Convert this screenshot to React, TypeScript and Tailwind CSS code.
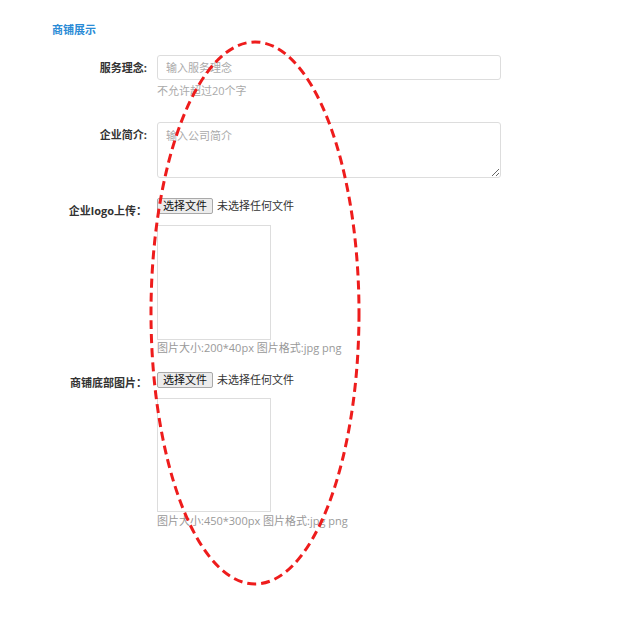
const FONT = "font-['Open_Sans','Noto_Sans_CJK_SC',sans-serif]";

function FileRow({ label, labelPad }: { label: string; labelPad: string }) {
  return (
    <div className="flex h-[16px] items-start">
      <div className={`h-[16px] w-[147px] whitespace-nowrap text-right text-[11px] leading-[14px] font-bold text-[#333] ${labelPad}`}>
        {label}
      </div>
      <div className="ml-[10px] flex items-center">
        <button className="h-[16px] w-[56px] rounded-[2px] border border-[#a9a9a9] bg-[#ececec] text-[11px] leading-[14px] text-[#111]">
          选择文件
        </button>
        <span className="ml-[4px] text-[11px] leading-[14px] text-[#333]">未选择任何文件</span>
      </div>
    </div>
  );
}

export default function App() {
  return (
    <div className={`relative h-[631px] w-[640px] overflow-hidden bg-white ${FONT}`}>
      {/* Section title */}
      <div className="pl-[52px] pt-[23px] text-[11px] leading-[14px] font-bold text-[#2a8bd6]">商铺展示</div>

      {/* 服务理念 */}
      <div className="mt-[18px] flex items-start">
        <div className="w-[147px] text-right text-[11px] leading-[25px] font-bold text-[#333]">服务理念:</div>
        <div className="ml-[10px]">
          <input
            placeholder="输入服务理念"
            className="block h-[25px] w-[344px] rounded-[3px] border border-[#ddd] px-[8px] text-[11px] outline-none placeholder:text-[#aaa]"
          />
          <div className="mt-[4px] text-[11px] leading-[14px] text-[#aaa]">不允许超过20个字</div>
        </div>
      </div>

      {/* 企业简介 */}
      <div className="mt-[24px] flex items-start">
        <div className="w-[147px] pt-[6px] text-right text-[11px] leading-[14px] font-bold text-[#333]">企业简介:</div>
        <textarea
          placeholder="输入公司简介"
          className="ml-[10px] block h-[56px] w-[344px] rounded-[3px] border border-[#ddd] px-[8px] py-[5px] text-[11px] outline-none placeholder:text-[#aaa]"
        />
      </div>

      {/* 企业logo上传 */}
      <div className="mt-[20px]">
        <FileRow label="企业logo上传：" labelPad="pt-[6px]" />
        <div className="ml-[157px] mt-[11px] h-[115px] w-[114px] border border-[#ddd]" />
        <div className="ml-[157px] mt-[1px] text-[11px] leading-[14px] text-[#999]">图片大小:200*40px 图片格式:jpg png</div>
      </div>

      {/* 商铺底部图片 */}
      <div className="mt-[17px]">
        <FileRow label="商铺底部图片：" labelPad="pt-[4px]" />
        <div className="ml-[157px] mt-[10px] h-[114px] w-[114px] border border-[#ddd]" />
        <div className="ml-[157px] mt-[2px] text-[11px] leading-[14px] text-[#999]">图片大小:450*300px 图片格式:jpg png</div>
      </div>

      {/* Red dashed annotation */}
      <svg className="pointer-events-none absolute left-0 top-0" width="640" height="631">
        <ellipse
          cx="255"
          cy="313"
          rx="104"
          ry="271"
          fill="none"
          stroke="#ee1c1c"
          strokeWidth="3"
          strokeDasharray="9 5"
        />
      </svg>
    </div>
  );
}
